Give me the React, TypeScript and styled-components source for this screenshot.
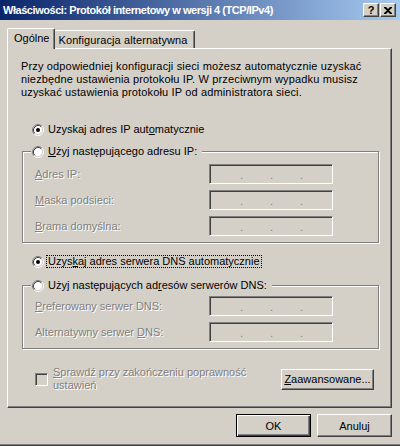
import styled, { createGlobalStyle, css } from "styled-components";

const FACE = "#d4d0c8";
const SHADOW = "#808080";
const DARK = "#404040";

const GlobalStyle = createGlobalStyle`
  html, body {
    margin: 0;
    padding: 0;
    background: ${FACE};
  }
  body {
    font-family: "Liberation Sans", Arial, sans-serif;
    font-size: 11px;
    color: #000;
  }
`;

const raised = css`
  border-top: 1px solid #fff;
  border-left: 1px solid #fff;
  border-right: 1px solid ${DARK};
  border-bottom: 1px solid ${DARK};
  box-shadow: inset -1px -1px 0 ${SHADOW};
`;

const sunken = css`
  border-top: 1px solid ${SHADOW};
  border-left: 1px solid ${SHADOW};
  border-right: 1px solid #fff;
  border-bottom: 1px solid #fff;
  box-shadow: inset 1px 1px 0 ${DARK}, inset -1px -1px 0 ${FACE};
`;

const Window = styled.div`
  width: 400px;
  height: 446px;
  box-sizing: border-box;
  display: flex;
  flex-direction: column;
  background: ${FACE};
  border-bottom: 1px solid ${DARK};
  box-shadow: inset 0 -1px 0 ${SHADOW};
`;

const TitleBar = styled.div`
  height: 20px;
  display: flex;
  align-items: center;
  justify-content: space-between;
  padding: 0 4px 0 3px;
  background: linear-gradient(to right, #0a246a, #a6caf0);
`;

const Title = styled.span`
  color: #fff;
  font-weight: bold;
  font-size: 11px;
  letter-spacing: -0.45px;
  white-space: nowrap;
`;

const CaptionButtons = styled.div`
  display: flex;
  gap: 1px;
`;

const CaptionButton = styled.div`
  width: 16px;
  height: 14px;
  box-sizing: border-box;
  background: ${FACE};
  ${raised};
  display: flex;
  align-items: center;
  justify-content: center;
  font-weight: bold;
  font-size: 11px;
  line-height: 1;
`;

const Body = styled.div`
  flex: 1;
  display: flex;
  flex-direction: column;
  padding: 8px 8px 0 7px;
`;

const TabStrip = styled.div`
  display: flex;
  align-items: flex-end;
  height: 20px;
`;

const Tab = styled.div<{ $active?: boolean }>`
  box-sizing: border-box;
  display: flex;
  align-items: center;
  background: ${FACE};
  border-top: 1px solid #fff;
  border-right: 1px solid ${DARK};
  box-shadow: inset -1px 0 0 ${SHADOW};
  border-radius: 2px 2px 0 0;
  white-space: nowrap;
  ${(p) =>
    p.$active
      ? css`
          position: relative;
          z-index: 1;
          height: 21px;
          margin-bottom: -1px;
          padding: 0 5px 2px 6px;
          border-left: 1px solid #fff;
        `
      : css`
          height: 18px;
          padding: 0 6px 0 3px;
          letter-spacing: 0.1px;
        `}
`;

const Panel = styled.div`
  box-sizing: border-box;
  height: 360px;
  display: flex;
  flex-direction: column;
  background: ${FACE};
  ${raised};
`;

const Intro = styled.p`
  margin: 11px 0 0 13px;
  line-height: 13px;
  letter-spacing: 0.15px;
  white-space: nowrap;
`;

const OptionRow = styled.div<{ $top: number }>`
  display: flex;
  align-items: center;
  gap: 2px;
  margin: ${(p) => p.$top}px 0 0 24px;
`;

const OptionLabel = styled.span<{ $focused?: boolean }>`
  line-height: 11px;
  padding: 0 1px;
  border: 1px ${(p) => (p.$focused ? "dotted #000" : "solid transparent")};
  white-space: nowrap;
`;

const Key = styled.span`
  text-decoration: underline;
`;

const Group = styled.fieldset<{ $top: number; $padTop: number }>`
  box-sizing: border-box;
  width: 357px;
  margin: ${(p) => p.$top}px 0 0 14px;
  padding: ${(p) => p.$padTop}px 0 6px 12px;
  border: 1px solid ${SHADOW};
  box-shadow: inset 1px 1px 0 #fff, 1px 1px 0 #fff;
  min-inline-size: 0;
`;

const Legend = styled.legend`
  display: flex;
  align-items: center;
  gap: 2px;
  margin-left: -4px;
  padding: 0 3px 0 1px;
  background: ${FACE};
  height: 13px;
`;

const Fields = styled.div`
  display: grid;
  grid-template-columns: 174px 124px;
  row-gap: 6px;
  align-items: center;
`;

const Disabled = styled.span`
  color: ${SHADOW};
  text-shadow: 1px 1px 0 #fff;
  white-space: nowrap;
`;

const IpBox = styled.div`
  box-sizing: border-box;
  width: 124px;
  height: 20px;
  background: ${FACE};
  ${sunken};
  display: flex;
  align-items: flex-end;
  padding: 0 0 3px 30px;
  gap: 28px;
`;

const IpDot = styled.span`
  width: 2px;
  line-height: 9px;
  color: ${SHADOW};
`;

const BottomRow = styled.div`
  display: flex;
  align-items: center;
  justify-content: space-between;
  margin: 17px 17px 0 27px;
`;

const CheckRow = styled.div`
  display: flex;
  align-items: center;
  gap: 5px;
`;

const CheckBox = styled.div`
  box-sizing: border-box;
  width: 13px;
  height: 13px;
  background: ${FACE};
  ${sunken};
`;

const CheckText = styled(Disabled)`
  line-height: 13px;
`;

const Button = styled.div<{ $default?: boolean; $width: number; $height: number }>`
  box-sizing: border-box;
  width: ${(p) => p.$width}px;
  height: ${(p) => p.$height}px;
  display: flex;
  align-items: center;
  justify-content: center;
  background: ${FACE};
  white-space: nowrap;
  ${(p) =>
    p.$default
      ? css`
          border: 1px solid #000;
          box-shadow: inset 1px 1px 0 #fff, inset -1px -1px 0 ${DARK},
            inset -2px -2px 0 ${SHADOW};
        `
      : raised};
`;

const DialogButtons = styled.div`
  display: flex;
  justify-content: flex-end;
  gap: 6px;
  margin-top: 6px;
`;

const Radio = ({ checked }: { checked?: boolean }) => (
  <svg width="12" height="12" viewBox="0 0 12 12" style={{ flex: "none" }}>
    <circle cx="6" cy="6" r="4.5" fill="#fff" />
    <path d="M2.11 9.89 A5.5 5.5 0 0 1 9.89 2.11" fill="none" stroke={SHADOW} />
    <path d="M9.89 2.11 A5.5 5.5 0 0 1 2.11 9.89" fill="none" stroke="#fff" />
    <path d="M2.82 9.18 A4.5 4.5 0 0 1 9.18 2.82" fill="none" stroke={DARK} />
    <path d="M9.18 2.82 A4.5 4.5 0 0 1 2.82 9.18" fill="none" stroke={FACE} />
    {checked && <circle cx="6" cy="6" r="2" fill="#000" />}
  </svg>
);

const CloseGlyph = () => (
  <svg width="8" height="7" viewBox="0 0 8 7">
    <path d="M0 0h2l2 2 2-2h2v1L5 3.5 8 6v1H6L4 5 2 7H0V6l3-2.5L0 1z" fill="#000" />
  </svg>
);

const IpField = () => (
  <IpBox>
    <IpDot>.</IpDot>
    <IpDot>.</IpDot>
    <IpDot>.</IpDot>
  </IpBox>
);

export default function App() {
  return (
    <>
      <GlobalStyle />
      <Window>
        <TitleBar>
          <Title>Właściwości: Protokół internetowy w wersji 4 (TCP/IPv4)</Title>
          <CaptionButtons>
            <CaptionButton>?</CaptionButton>
            <CaptionButton>
              <CloseGlyph />
            </CaptionButton>
          </CaptionButtons>
        </TitleBar>
        <Body>
          <TabStrip>
            <Tab $active>Ogólne</Tab>
            <Tab>Konfiguracja alternatywna</Tab>
          </TabStrip>
          <Panel>
            <Intro>
              Przy odpowiedniej konfiguracji sieci możesz automatycznie uzyskać
              <br />
              niezbędne ustawienia protokołu IP. W przeciwnym wypadku musisz
              <br />
              uzyskać ustawienia protokołu IP od administratora sieci.
            </Intro>

            <OptionRow $top={24}>
              <Radio checked />
              <OptionLabel>
                Uzyskaj adres IP aut<Key>o</Key>matycznie
              </OptionLabel>
            </OptionRow>

            <Group $top={9} $padTop={6}>
              <Legend>
                <Radio />
                <OptionLabel>
                  <Key>U</Key>żyj następującego adresu IP:
                </OptionLabel>
              </Legend>
              <Fields>
                <Disabled>
                  <Key>A</Key>dres IP:
                </Disabled>
                <IpField />
                <Disabled>
                  <Key>M</Key>aska podsieci:
                </Disabled>
                <IpField />
                <Disabled>
                  <Key>B</Key>rama domyślna:
                </Disabled>
                <IpField />
              </Fields>
            </Group>

            <OptionRow $top={12}>
              <Radio checked />
              <OptionLabel $focused>
                Uzys<Key>k</Key>aj adres serwera DNS automatycznie
              </OptionLabel>
            </OptionRow>

            <Group $top={11} $padTop={4}>
              <Legend>
                <Radio />
                <OptionLabel>
                  Użyj następujących ad<Key>r</Key>esów serwerów DNS:
                </OptionLabel>
              </Legend>
              <Fields>
                <Disabled>
                  <Key>P</Key>referowany serwer DNS:
                </Disabled>
                <IpField />
                <Disabled>
                  Alternatywny serwer <Key>D</Key>NS:
                </Disabled>
                <IpField />
              </Fields>
            </Group>

            <BottomRow>
              <CheckRow>
                <CheckBox />
                <CheckText>
                  <Key>S</Key>prawdź przy zakończeniu poprawność
                  <br />
                  ustawień
                </CheckText>
              </CheckRow>
              <Button $width={93} $height={21}>
                <Key>Z</Key>aawansowane...
              </Button>
            </BottomRow>
          </Panel>
          <DialogButtons>
            <Button $default $width={75} $height={23}>
              OK
            </Button>
            <Button $width={75} $height={23}>
              Anuluj
            </Button>
          </DialogButtons>
        </Body>
      </Window>
    </>
  );
}
